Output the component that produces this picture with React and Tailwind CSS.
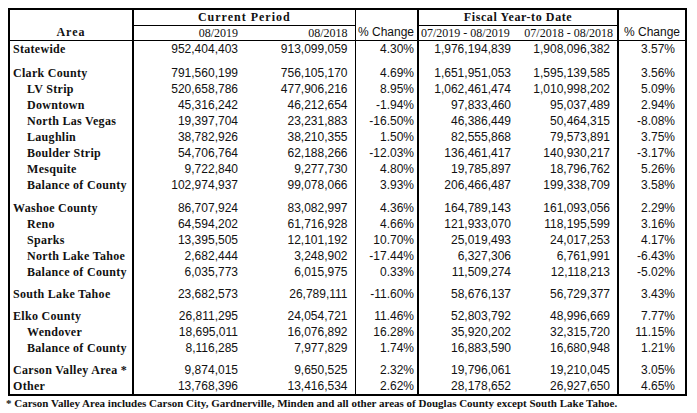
const serif = 'font-["Liberation_Serif","Times_New_Roman",serif]';
const sans = 'font-["Liberation_Sans",Arial,sans-serif]';

const groups = [
  [['Statewide', false, '952,404,403', '913,099,059', '4.30%', '1,976,194,839', '1,908,096,382', '3.57%']],
  [
    ['Clark County', false, '791,560,199', '756,105,170', '4.69%', '1,651,951,053', '1,595,139,585', '3.56%'],
    ['LV Strip', true, '520,658,786', '477,906,216', '8.95%', '1,062,461,474', '1,010,998,202', '5.09%'],
    ['Downtown', true, '45,316,242', '46,212,654', '-1.94%', '97,833,460', '95,037,489', '2.94%'],
    ['North Las Vegas', true, '19,397,704', '23,231,883', '-16.50%', '46,386,449', '50,464,315', '-8.08%'],
    ['Laughlin', true, '38,782,926', '38,210,355', '1.50%', '82,555,868', '79,573,891', '3.75%'],
    ['Boulder Strip', true, '54,706,764', '62,188,266', '-12.03%', '136,461,417', '140,930,217', '-3.17%'],
    ['Mesquite', true, '9,722,840', '9,277,730', '4.80%', '19,785,897', '18,796,762', '5.26%'],
    ['Balance of County', true, '102,974,937', '99,078,066', '3.93%', '206,466,487', '199,338,709', '3.58%'],
  ],
  [
    ['Washoe County', false, '86,707,924', '83,082,997', '4.36%', '164,789,143', '161,093,056', '2.29%'],
    ['Reno', true, '64,594,202', '61,716,928', '4.66%', '121,933,070', '118,195,599', '3.16%'],
    ['Sparks', true, '13,395,505', '12,101,192', '10.70%', '25,019,493', '24,017,253', '4.17%'],
    ['North Lake Tahoe', true, '2,682,444', '3,248,902', '-17.44%', '6,327,306', '6,761,991', '-6.43%'],
    ['Balance of County', true, '6,035,773', '6,015,975', '0.33%', '11,509,274', '12,118,213', '-5.02%'],
  ],
  [['South Lake Tahoe', false, '23,682,573', '26,789,111', '-11.60%', '58,676,137', '56,729,377', '3.43%']],
  [
    ['Elko County', false, '26,811,295', '24,054,721', '11.46%', '52,803,792', '48,996,669', '7.77%'],
    ['Wendover', true, '18,695,011', '16,076,892', '16.28%', '35,920,202', '32,315,720', '11.15%'],
    ['Balance of County', true, '8,116,285', '7,977,829', '1.74%', '16,883,590', '16,680,948', '1.21%'],
  ],
  [
    ['Carson Valley Area *', false, '9,874,015', '9,650,525', '2.32%', '19,796,061', '19,210,045', '3.05%'],
    ['Other', false, '13,768,396', '13,416,534', '2.62%', '28,178,652', '26,927,650', '4.65%'],
  ],
];

function Row({ r }) {
  const [name, sub, a, b, c, d, e, f] = r;
  return (
    <tr className="h-4 leading-4">
      <td className={`border-r-2 border-black ${serif} font-bold tracking-[0.3px] whitespace-nowrap ${sub ? 'pl-[17px]' : 'pl-[3px]'}`}>{name}</td>
      <td className="pr-[7px] text-right">{a}</td>
      <td className="pr-[7px] text-right">{b}</td>
      <td className="border-l border-black pr-[3px] text-right">{c}</td>
      <td className="border-l-2 border-black pr-[7px] text-right">{d}</td>
      <td className="pr-[7px] text-right">{e}</td>
      <td className="border-l-2 border-black pr-[10px] text-right">{f}</td>
    </tr>
  );
}

function Spacer({ h }) {
  return (
    <tr className={h}>
      <td className="border-r-2 border-black" />
      <td />
      <td />
      <td className="border-l border-black" />
      <td className="border-l-2 border-black" />
      <td />
      <td className="border-l-2 border-black" />
    </tr>
  );
}

export default function App() {
  const gaps = ['h-[8px]', 'h-[7px]', 'h-[6px]', 'h-[6px]', 'h-[6px]'];
  return (
    <div className={`h-[413px] w-[697px] bg-white pl-2 pt-2 text-[#111] ${sans} text-[12px]`}>
      <table className="w-[677px] table-fixed border-collapse border-2 border-black">
        <colgroup>
          <col className="w-[124px]" />
          <col className="w-[112px]" />
          <col className="w-[110px]" />
          <col className="w-[63px]" />
          <col className="w-[100px]" />
          <col className="w-[100px]" />
          <col className="w-[68px]" />
        </colgroup>
        <thead>
          <tr className="h-[15px] leading-[15px]">
            <td rowSpan={2} className={`border-r-2 border-b border-black align-bottom text-center ${serif} font-bold tracking-[1px]`}>Area</td>
            <td colSpan={2} className={`border-b border-black text-center ${serif} font-bold tracking-[1px]`}>Current Period</td>
            <td rowSpan={2} className="border-l border-b border-black align-bottom text-right whitespace-nowrap pr-[3px]">% Change</td>
            <td colSpan={2} className={`border-l-2 border-b border-black text-center ${serif} font-bold tracking-[0.6px]`}>Fiscal Year-to Date</td>
            <td rowSpan={2} className="border-l-2 border-b border-black align-bottom text-center whitespace-nowrap">% Change</td>
          </tr>
          <tr className={`h-[14px] leading-[14px] border-b border-black ${serif}`}>
            <td className="pr-[7px] text-right">08/2019</td>
            <td className="pr-[7px] text-right">08/2018</td>
            <td className="border-l-2 border-black pl-[2px] text-left whitespace-nowrap">07/2019 - 08/2019</td>
            <td className="pr-[4px] text-right whitespace-nowrap">07/2018 - 08/2018</td>
          </tr>
        </thead>
        <tbody>
          {groups.map((g, gi) => (
            <>
              {g.map((r, ri) => (
                <Row key={`${gi}-${ri}`} r={r} />
              ))}
              {gi < gaps.length && <Spacer key={`s${gi}`} h={gaps[gi]} />}
            </>
          ))}
        </tbody>
      </table>
      <p className={`${serif} -ml-[2px] mt-[1px] text-[11px] font-bold leading-[13px]`}>
        * Carson Valley Area includes Carson City, Gardnerville, Minden and all other areas of Douglas County except South Lake Tahoe.
      </p>
    </div>
  );
}
